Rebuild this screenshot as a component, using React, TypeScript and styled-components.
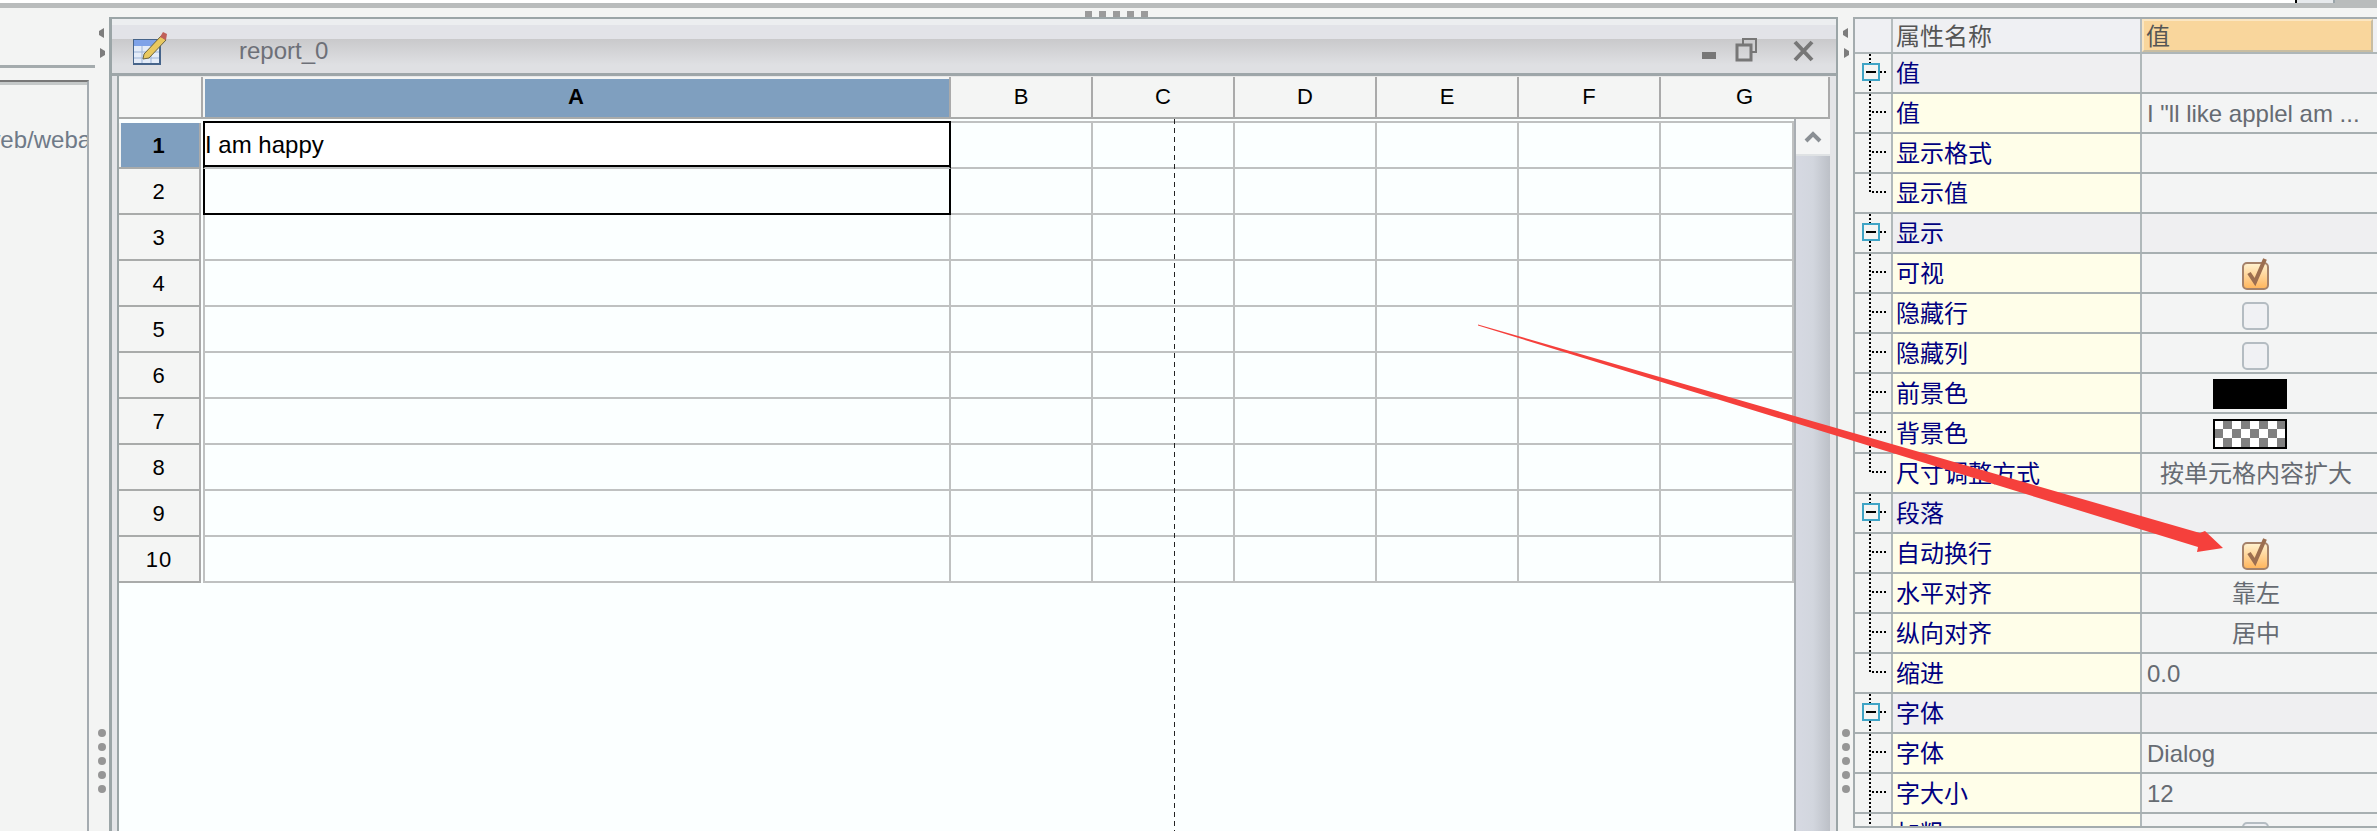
import React from "react";
import styled, { createGlobalStyle } from "styled-components";

const GlobalStyle = createGlobalStyle`
  html, body {
    margin: 0;
    padding: 0;
    background: #f3f4f3;
    overflow: hidden;
  }
  * { box-sizing: border-box; }
`;

const Page = styled.div`
  position: relative;
  width: 2377px;
  height: 831px;
  overflow: hidden;
  background: #f3f4f3;
  font-family: "Liberation Sans", "Noto Sans CJK SC", sans-serif;
  font-size: 24px;
`;

const TopStrip = styled.div`
  display: flex;
  height: 8px;
  align-items: flex-start;
  background: #b9bcbc;
`;

const TopField = styled.div`
  width: 2297px;
  height: 3px;
  background: #fff;
  border-right: 2px solid #000;
`;

const TopButton = styled.div`
  width: 38px;
  height: 3px;
  background: #e6e9ec;
  border-right: 2px solid #9ba5aa;
`;

const HandleBar = styled.div`
  display: flex;
  justify-content: flex-start;
  gap: 7px;
  height: 9px;
  padding: 3px 0 0 1085px;
`;

const HandleDot = styled.span`
  width: 7px;
  height: 6px;
  background: #9b9b9b;
`;

const Panes = styled.div`
  display: flex;
  height: 814px;
`;

const LeftPane = styled.div`
  width: 95px;
  flex: none;
  padding-top: 48px;
`;

const LeftOuter = styled.div`
  height: 100%;
  padding: 12px 6px 0 0;
  border-top: 3px solid #a4abad;
`;

const LeftInner = styled.div`
  height: 100%;
  border-top: 2px solid #777;
  border-right: 2px solid #a4abb0;
  box-shadow: inset 0 3px 0 #c4c8c8;
  padding-top: 44px;
  overflow: hidden;
`;

const PathText = styled.div`
  color: #6f7a88;
  white-space: nowrap;
  text-indent: -17px;
  line-height: 28px;
`;

const Splitter = styled.div<{ $w: number }>`
  width: ${(p) => p.$w}px;
  flex: none;
  display: flex;
  flex-direction: column;
  align-items: center;
  padding-top: 11px;
`;

const SplitArrows = styled.div`
  display: flex;
  flex-direction: column;
  gap: 10px;
`;

const SplitDots = styled.div`
  display: flex;
  flex-direction: column;
  gap: 6px;
  margin-top: 671px;
`;

const SplitDot = styled.span`
  width: 8px;
  height: 8px;
  border-radius: 50%;
  background: #969696;
`;

const Window = styled.div`
  width: 1729px;
  flex: none;
  height: 100%;
  display: flex;
  flex-direction: column;
  border: solid #9ba5a7;
  border-width: 2px 2px 0 3px;
  background: #e4e5e8;
  padding: 0 6px 0 5px;
`;

const TitleBar = styled.div`
  flex: none;
  height: 57px;
  margin: 0 -6px 0 -5px;
  display: flex;
  align-items: center;
  padding: 4px 20px 0 21px;
  border-bottom: 3px solid #9ea6a9;
  background: linear-gradient(
    to bottom,
    #eceef0 0,
    #eceef0 6px,
    #e2e3e8 6px,
    #e2e3e8 20px,
    #c9c9cb 20px,
    #dfe0e3 46px,
    #dfe0e3 100%
  );
`;

const TitleIcon = styled.svg`
  flex: none;
  width: 34px;
  height: 34px;
`;

const TitleText = styled.span`
  margin: 5px 0 0 72px;
  color: #6d7078;
  line-height: 28px;
`;

const WindowControls = styled.div`
  margin: 6px 0 0 auto;
  display: flex;
`;

const Sheet = styled.div`
  flex: 1;
  min-height: 0;
  display: flex;
  flex-direction: column;
  border-left: 2px solid #9ba5a7;
  background: #fbffff;
`;

const HeaderRow = styled.div`
  display: flex;
  flex: none;
  height: 43px;
  background: #f4f5f4;
  border-top: 1px solid #e8e8e8;
`;

const Corner = styled.div`
  width: 84px;
  flex: none;
  border-right: 2px solid #aaa;
  border-bottom: 2px solid #a9abaa;
  box-shadow: inset -2px 0 0 #f4f5f4;
`;

const ColHead = styled.div<{ $w: number; $active?: boolean }>`
  width: ${(p) => p.$w}px;
  flex: none;
  display: flex;
  align-items: center;
  justify-content: center;
  border-right: 2px solid #aaa;
  border-bottom: 2px solid #a9abaa;
  font-size: 22px;
  font-weight: ${(p) => (p.$active ? 700 : 400)};
  color: #000;
  background: ${(p) => (p.$active ? "#7f9fbf" : "#f4f5f4")};
  box-shadow: ${(p) => (p.$active ? "inset 2px 2px 0 #f4f5f4" : "none")};
`;

const SheetBody = styled.div`
  position: relative;
  flex: 1;
  min-height: 0;
  display: flex;
  overflow: hidden;
`;

const GridBody = styled.div`
  flex: 1;
  min-width: 0;
  padding-top: 4px;
`;

const GridRow = styled.div`
  display: flex;
  height: 46px;
`;

const RowHead = styled.div<{ $active?: boolean }>`
  width: 82px;
  flex: none;
  margin-right: 2px;
  display: flex;
  align-items: center;
  justify-content: center;
  padding-top: 2px;
  font-size: 22px;
  font-weight: ${(p) => (p.$active ? 700 : 400)};
  color: #000;
  letter-spacing: 1px;
  background: ${(p) => (p.$active ? "#7f9fbf" : "#f4f5f4")};
  border-right: 2px solid #aaa;
  border-bottom: 2px solid #a9abaa;
  box-shadow: ${(p) => (p.$active ? "inset 2px 0 0 #f4f5f4" : "none")};
`;

const Cell = styled.div<{ $w?: number; $first?: boolean; $top?: boolean }>`
  ${(p) => (p.$w ? `width: ${p.$w}px; flex: none;` : "flex: 1;")}
  border-right: 2px solid #bfc1c1;
  border-bottom: 2px solid #bfc1c1;
  ${(p) => (p.$first ? "border-left: 2px solid #bfc1c1;" : "")}
  ${(p) => (p.$top ? "box-shadow: 0 -2px 0 #bfc1c1;" : "")}
`;

const ActiveCell = styled(Cell)`
  background: #fff;
  border-left-color: #000;
  border-right-color: #000;
  box-shadow: inset 0 -2px 0 #000, 0 -2px 0 #000;
  display: flex;
  align-items: center;
  color: #000;
  white-space: nowrap;
`;

const SelectedCell = styled(Cell)`
  border-left-color: #000;
  border-right-color: #000;
  border-bottom-color: #000;
`;

const PrintBreak = styled.div`
  position: absolute;
  top: 0;
  bottom: 0;
  left: 1055px;
  width: 1px;
  background: repeating-linear-gradient(to bottom, #222 0, #222 5px, transparent 5px, transparent 9px);
`;

const Scrollbar = styled.div`
  width: 36px;
  flex: none;
  display: flex;
  flex-direction: column;
  border-left: 2px solid #a9aeb3;
  background: linear-gradient(to right, #d6d9e2, #d2d6de 50%, #bcc0c7);
`;

const ScrollButton = styled.div`
  height: 37px;
  display: flex;
  align-items: center;
  justify-content: center;
  background: #f4f5f5;
  border-bottom: 2px solid #dfe2e4;
`;

const PropTable = styled.div`
  flex: 1;
  min-width: 0;
  height: 811px;
  overflow: hidden;
  border: solid #a4acae;
  border-width: 2px 0 2px 2px;
`;

const PropHeader = styled.div`
  display: grid;
  grid-template-columns: 38px 249px 1fr;
  grid-template-rows: 33px;
  height: 35px;
  border-bottom: 2px solid #aeb6b8;
  background: #eff0f3;
  color: #555;
  line-height: 36px;
`;

const PropHeadCell = styled.div`
  padding-left: 3px;
  border-right: 2px solid #b5bcbe;
  white-space: nowrap;
`;

const PropHeadActive = styled.div`
  margin-right: 4px;
  padding-left: 2px;
  background: #f9d69c;
  border: 2px solid #fbe6c2;
  border-right-color: #c8bda2;
  border-bottom-color: #c8bda2;
  line-height: 31px;
`;

const PropRow = styled.div`
  display: grid;
  grid-template-columns: 38px 249px 1fr;
  grid-template-rows: 38px;
  height: 40px;
  border-bottom: 2px solid #a7afb1;
  line-height: 40px;
`;

const TreeCell = styled.div`
  background: #f3f4f3;
  border-right: 2px solid #b0b8ba;
`;

const TreeSvg = styled.svg`
  display: block;
  width: 36px;
  height: 38px;
`;

const NameCell = styled.div<{ $group?: boolean }>`
  padding-left: 3px;
  color: #000080;
  white-space: nowrap;
  border-right: 2px solid #b0b8ba;
  background: ${(p) => (p.$group ? "#efeff1" : "#fffee9")};
`;

const ValueCell = styled.div<{ $group?: boolean; $center?: boolean }>`
  display: flex;
  align-items: center;
  justify-content: ${(p) => (p.$center ? "center" : "flex-start")};
  padding: ${(p) => (p.$center ? "2px 7px 0 0" : "2px 0 0 5px")};
  color: #666b72;
  white-space: nowrap;
  background: ${(p) => (p.$group ? "#efeff1" : "#f3f4f4")};
`;

const Swatch = styled.div<{ $checker?: boolean }>`
  width: 74px;
  height: 30px;
  margin-right: 12px;
  ${(p) =>
    p.$checker
      ? `border: 2px solid #000;
         background: repeating-conic-gradient(#808080 0 25%, #fff 0 50%) -1px -1px / 18px 18px;`
      : "background: #000;"}
`;

const CheckSvg = styled.svg`
  display: block;
  width: 30px;
  height: 36px;
`;

const ArrowOverlay = styled.svg`
  position: absolute;
  left: 0;
  top: 0;
  width: 2377px;
  height: 831px;
  pointer-events: none;
`;

const columns = [
  { label: "B", w: 142 },
  { label: "C", w: 142 },
  { label: "D", w: 142 },
  { label: "E", w: 142 },
  { label: "F", w: 142 },
];

type PropItem = {
  name: string;
  kind: "group" | "item" | "last";
  value?: string;
  center?: boolean;
  check?: boolean;
  swatch?: "black" | "checker";
};

const props: PropItem[] = [
  { name: "值", kind: "group" },
  { name: "值", kind: "item", value: "I \"ll like applel am ..." },
  { name: "显示格式", kind: "item" },
  { name: "显示值", kind: "last" },
  { name: "显示", kind: "group" },
  { name: "可视", kind: "item", check: true },
  { name: "隐藏行", kind: "item", check: false },
  { name: "隐藏列", kind: "item", check: false },
  { name: "前景色", kind: "item", swatch: "black" },
  { name: "背景色", kind: "item", swatch: "checker" },
  { name: "尺寸调整方式", kind: "last", value: "按单元格内容扩大", center: true },
  { name: "段落", kind: "group" },
  { name: "自动换行", kind: "item", check: true },
  { name: "水平对齐", kind: "item", value: "靠左", center: true },
  { name: "纵向对齐", kind: "item", value: "居中", center: true },
  { name: "缩进", kind: "last", value: "0.0" },
  { name: "字体", kind: "group" },
  { name: "字体", kind: "item", value: "Dialog" },
  { name: "字大小", kind: "item", value: "12" },
  { name: "加粗", kind: "item", check: false },
];

function TreeGlyph({ kind }: { kind: PropItem["kind"] }) {
  const dots = { stroke: "#000", strokeWidth: 2, strokeDasharray: "2 2" };
  if (kind === "group") {
    return (
      <TreeSvg viewBox="0 0 36 38">
        <line x1="15" y1="0" x2="15" y2="9" {...dots} />
        <line x1="15" y1="27" x2="15" y2="38" {...dots} />
        <line x1="25" y1="18" x2="33" y2="18" {...dots} />
        <rect x="8" y="10" width="16" height="16" fill="#f3f4f3" stroke="#3fa4c6" strokeWidth="2" />
        <line x1="11" y1="18" x2="21" y2="18" stroke="#000" strokeWidth="2" />
      </TreeSvg>
    );
  }
  return (
    <TreeSvg viewBox="0 0 36 38">
      <line x1="15" y1="0" x2="15" y2={kind === "last" ? 18 : 38} {...dots} />
      <line x1="17" y1="18" x2="33" y2="18" {...dots} />
    </TreeSvg>
  );
}

function Check({ on }: { on: boolean }) {
  return (
    <CheckSvg viewBox="0 0 30 36">
      <defs>
        <linearGradient id="checkFill" x1="0" y1="0" x2="0" y2="1">
          <stop offset="0" stopColor="#fff3d2" />
          <stop offset="1" stopColor="#ffb45a" />
        </linearGradient>
      </defs>
      <rect
        x="2"
        y="7"
        width="25"
        height="26"
        rx="4"
        fill={on ? "url(#checkFill)" : "#f0f1f4"}
        stroke={on ? "#a5826a" : "#b4bcc2"}
        strokeWidth="2"
      />
      {on && <path d="M8 17 L14 26 L24 3" fill="none" stroke="#9c6e50" strokeWidth="4" />}
    </CheckSvg>
  );
}

function SplitGrip({ w }: { w: number }) {
  return (
    <Splitter $w={w}>
      <SplitArrows>
        <svg width="8" height="10" viewBox="0 0 8 10">
          <path d="M6 0 L1 3 L1 7 L6 10 Z" fill="#7d7d7d" />
        </svg>
        <svg width="8" height="10" viewBox="0 0 8 10">
          <path d="M2 0 L7 3 L7 7 L2 10 Z" fill="#7d7d7d" />
        </svg>
      </SplitArrows>
      <SplitDots>
        {[0, 1, 2, 3, 4].map((i) => (
          <SplitDot key={i} />
        ))}
      </SplitDots>
    </Splitter>
  );
}

export default function App() {
  return (
    <Page>
      <GlobalStyle />
      <TopStrip>
        <TopField />
        <TopButton />
      </TopStrip>
      <HandleBar>
        {[0, 1, 2, 3, 4].map((i) => (
          <HandleDot key={i} />
        ))}
      </HandleBar>
      <Panes>
        <LeftPane>
          <LeftOuter>
            <LeftInner>
              <PathText>web/webapp</PathText>
            </LeftInner>
          </LeftOuter>
        </LeftPane>
        <SplitGrip w={14} />

        <Window>
          <TitleBar>
            <TitleIcon viewBox="0 0 34 34">
              <rect x="0" y="8" width="28" height="26" fill="#46648a" />
              <rect x="1" y="9" width="25" height="23" fill="#e4ecf8" />
              <rect x="1" y="9" width="25" height="6" fill="#7ea2e8" />
              <path d="M1 21 H26 M1 27 H26 M9 15 V32 M18 15 V32" stroke="#9db4d8" strokeWidth="1" />
              <path d="M11 23 L28 5 L33 9 L16 27 L10 28 Z" fill="#e8c860" stroke="#6b6440" strokeWidth="1" />
              <path d="M27 6 L30 1 L34 3 L33 9 Z" fill="#c0605a" />
            </TitleIcon>
            <TitleText>report_0</TitleText>
            <WindowControls>
              <svg width="114" height="26" viewBox="0 0 114 26">
                <rect x="0" y="14" width="14" height="7" fill="#777" />
                <path d="M41 6 V1 H54 V14 H49" fill="none" stroke="#777" strokeWidth="2" />
                <rect x="35" y="7" width="14" height="15" fill="none" stroke="#777" strokeWidth="3" />
                <path d="M93 4 L110 22 M110 4 L93 22" stroke="#777" strokeWidth="4" />
              </svg>
            </WindowControls>
          </TitleBar>

          <Sheet>
            <HeaderRow>
              <Corner />
              <ColHead $w={748} $active>
                A
              </ColHead>
              {columns.map((c) => (
                <ColHead key={c.label} $w={c.w}>
                  {c.label}
                </ColHead>
              ))}
              <ColHead $w={169}>G</ColHead>
            </HeaderRow>
            <SheetBody>
              <GridBody>
                {Array.from({ length: 10 }, (_, i) => (
                  <GridRow key={i}>
                    <RowHead $active={i === 0}>{i + 1}</RowHead>
                    {i === 0 ? (
                      <ActiveCell $w={748} $first>
                        I am happy
                      </ActiveCell>
                    ) : i === 1 ? (
                      <SelectedCell $w={748} $first />
                    ) : (
                      <Cell $w={748} $first />
                    )}
                    {columns.map((c) => (
                      <Cell key={c.label} $w={c.w} $top={i === 0} />
                    ))}
                    <Cell $top={i === 0} />
                  </GridRow>
                ))}
              </GridBody>
              <Scrollbar>
                <ScrollButton>
                  <svg width="18" height="12" viewBox="0 0 18 12">
                    <path d="M2 10 L9 3 L16 10" fill="none" stroke="#8a8f94" strokeWidth="4" />
                  </svg>
                </ScrollButton>
              </Scrollbar>
              <PrintBreak />
            </SheetBody>
          </Sheet>
        </Window>

        <SplitGrip w={15} />

        <PropTable>
          <PropHeader>
            <PropHeadCell />
            <PropHeadCell>属性名称</PropHeadCell>
            <PropHeadActive>值</PropHeadActive>
          </PropHeader>
          {props.map((p, i) => (
            <PropRow key={i}>
              <TreeCell>
                <TreeGlyph kind={p.kind} />
              </TreeCell>
              <NameCell $group={p.kind === "group"}>{p.name}</NameCell>
              <ValueCell $group={p.kind === "group"} $center={p.center || p.check !== undefined || !!p.swatch}>
                {p.value}
                {p.check !== undefined && <Check on={p.check} />}
                {p.swatch && <Swatch $checker={p.swatch === "checker"} />}
              </ValueCell>
            </PropRow>
          ))}
        </PropTable>
      </Panes>

      <ArrowOverlay viewBox="0 0 2377 831">
        <polygon
          points="1478,324.5 2200,533 2205,531 2223,548 2197,552 2198,547 1478,325.5"
          fill="#f5403c"
        />
      </ArrowOverlay>
    </Page>
  );
}
